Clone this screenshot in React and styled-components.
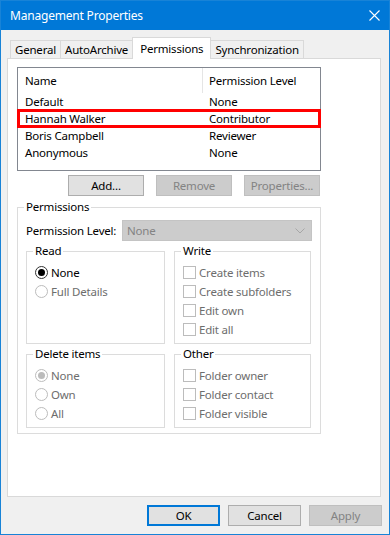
import React from "react"
import styled, { createGlobalStyle } from "styled-components"

const GlobalStyle = createGlobalStyle`
  html, body {
    margin: 0;
    padding: 0;
    background: #ffffff;
  }
  body {
    font-family: "Noto Sans", "Open Sans", sans-serif;
    font-size: 11.5px;
    letter-spacing: -0.2px;
    color: #000000;
  }
  * {
    box-sizing: border-box;
  }
`

const Window = styled.div`
  width: 390px;
  height: 535px;
  display: flex;
  flex-direction: column;
  border: 1px solid #1883d7;
  background: #f0f0f0;
  overflow: hidden;
`

const TitleBar = styled.div`
  height: 29px;
  flex: none;
  display: flex;
  align-items: center;
  justify-content: space-between;
  padding: 0 9px 0 9px;
  background: #0078d7;
  color: #ffffff;
  font-size: 12px;
`

const Body = styled.div`
  flex: 1;
  display: flex;
  flex-direction: column;
  padding: 7px 8px 8px 6px;
  min-height: 0;
`

const TabStrip = styled.div`
  display: flex;
  align-items: flex-end;
  height: 22px;
  padding-left: 3px;
  margin-bottom: -1px;
  position: relative;
  z-index: 1;
`

const Tab = styled.div`
  height: ${(p) => (p.$active ? "22px" : "19px")};
  padding: 0 ${(p) => (p.$active ? "7px" : "4px")};
  margin-left: -1px;
  display: flex;
  align-items: center;
  border: 1px solid #d9d9d9;
  border-bottom: ${(p) => (p.$active ? "none" : "1px solid #d9d9d9")};
  background: ${(p) => (p.$active ? "#ffffff" : "#f0f0f0")};
  position: relative;
  z-index: ${(p) => (p.$active ? 2 : 1)};
  white-space: nowrap;
  &:first-child {
    margin-left: 0;
  }
`

const Panel = styled.div`
  flex: 1;
  background: #ffffff;
  border: 1px solid #d9d9d9;
  padding: 8px 9px;
  display: flex;
  flex-direction: column;
  align-items: flex-start;
`

const ListBox = styled.div`
  width: 304px;
  height: 104px;
  flex: none;
  border: 1px solid #828790;
  background: #ffffff;
`

const ListRow = styled.div`
  display: grid;
  grid-template-columns: 185px 1fr;
  height: ${(p) => (p.$header ? "25px" : "17px")};
  align-items: center;
  outline: ${(p) => (p.$marked ? "3px solid #ff0000" : "none")};
  outline-offset: -2px;
  position: relative;
`

const Cell = styled.div`
  padding-left: ${(p) => (p.$second ? "6px" : "7px")};
  height: 100%;
  display: flex;
  align-items: center;
  white-space: nowrap;
  border-right: ${(p) => (p.$divider ? "1px solid #e5e5e5" : "none")};
`

const ButtonRow = styled.div`
  width: 304px;
  display: flex;
  justify-content: flex-end;
  gap: 12px;
  margin-top: 4px;
  padding-right: 1px;
`

const Button = styled.button`
  width: ${(p) => p.$w || 76}px;
  height: 21px;
  padding: 0;
  font: inherit;
  letter-spacing: inherit;
  color: ${(p) => (p.disabled ? "#838383" : "#000000")};
  background: ${(p) => (p.disabled ? "#cccccc" : "#e1e1e1")};
  border: ${(p) =>
    p.$primary ? "2px solid #0078d7" : p.disabled ? "1px solid #bfbfbf" : "1px solid #adadad"};
`

const Group = styled.fieldset`
  margin: 0;
  padding: ${(p) => (p.$outer ? "5px 8px 5px 8px" : "4px 8px 4px 8px")};
  border: 1px solid #dcdcdc;
  min-width: 0;
`

const Legend = styled.legend`
  padding: 0 2px;
  margin-left: -2px;
  line-height: 16px;
  color: #000000;
`

const OuterGroup = styled(Group)`
  width: 304px;
  margin-top: 3px;
`

const LevelRow = styled.div`
  display: flex;
  align-items: center;
  justify-content: space-between;
  white-space: nowrap;
`

const Select = styled.div`
  width: 190px;
  height: 21px;
  display: flex;
  align-items: center;
  justify-content: space-between;
  padding: 0 6px 0 4px;
  background: #cccccc;
  border: 1px solid #c4c4c4;
  color: #838383;
`

const GroupGrid = styled.div`
  display: grid;
  grid-template-columns: 139px 137px;
  column-gap: 9px;
  row-gap: 2px;
  margin-top: 2px;
`

const Option = styled.div`
  height: 19px;
  display: flex;
  align-items: center;
  gap: 3px;
  color: ${(p) => (p.$disabled ? "#6d6d6d" : "#000000")};
  white-space: nowrap;
`

const RadioMark = styled.span`
  width: 13px;
  height: 13px;
  flex: none;
  border-radius: 50%;
  border: 1px solid ${(p) => (p.$disabled ? "#bcbcbc" : "#333333")};
  background: #ffffff;
  display: flex;
  align-items: center;
  justify-content: center;
  &::after {
    content: "";
    width: 7px;
    height: 7px;
    border-radius: 50%;
    background: ${(p) => (p.$checked ? (p.$disabled ? "#bcbcbc" : "#000000") : "transparent")};
  }
`

const CheckMark = styled.span`
  width: 13px;
  height: 13px;
  flex: none;
  border: 1px solid #bcbcbc;
  background: #ffffff;
`

const Footer = styled.div`
  display: flex;
  justify-content: flex-end;
  gap: 8px;
  margin-top: 8px;
  margin-right: -1px;
`

const CloseIcon = () => (
  <svg width="11" height="11" viewBox="0 0 11 11">
    <path d="M0.5 0.5 L10.5 10.5 M10.5 0.5 L0.5 10.5" stroke="#ffffff" strokeWidth="1.1" />
  </svg>
)

const Chevron = () => (
  <svg width="10" height="6" viewBox="0 0 10 6">
    <path d="M0.5 0.5 L5 5 L9.5 0.5" fill="none" stroke="#a6a6a6" strokeWidth="1" />
  </svg>
)

const Radio = ({ label, checked, disabled }) => (
  <Option $disabled={disabled}>
    <RadioMark $checked={checked} $disabled={disabled} />
    {label}
  </Option>
)

const Check = ({ label }) => (
  <Option $disabled>
    <CheckMark />
    {label}
  </Option>
)

const people = [
  ["Default", "None"],
  ["Hannah Walker", "Contributor", true],
  ["Boris Campbell", "Reviewer"],
  ["Anonymous", "None"],
]

export default function App() {
  return (
    <>
      <GlobalStyle />
      <Window>
        <TitleBar>
          <span>Management Properties</span>
          <CloseIcon />
        </TitleBar>
        <Body>
          <TabStrip>
            <Tab>General</Tab>
            <Tab>AutoArchive</Tab>
            <Tab $active>Permissions</Tab>
            <Tab>Synchronization</Tab>
          </TabStrip>
          <Panel>
            <ListBox>
              <ListRow $header>
                <Cell $divider>Name</Cell>
                <Cell $second>Permission Level</Cell>
              </ListRow>
              {people.map(([name, level, marked]) => (
                <ListRow key={name} $marked={marked}>
                  <Cell>{name}</Cell>
                  <Cell $second>{level}</Cell>
                </ListRow>
              ))}
            </ListBox>
            <ButtonRow>
              <Button>Add...</Button>
              <Button disabled>Remove</Button>
              <Button disabled>Properties...</Button>
            </ButtonRow>
            <OuterGroup $outer>
              <Legend>Permissions</Legend>
              <LevelRow>
                <span>Permission Level:</span>
                <Select>
                  <span>None</span>
                  <Chevron />
                </Select>
              </LevelRow>
              <GroupGrid>
                <Group>
                  <Legend>Read</Legend>
                  <Radio label="None" checked />
                  <Radio label="Full Details" disabled />
                </Group>
                <Group>
                  <Legend>Write</Legend>
                  <Check label="Create items" />
                  <Check label="Create subfolders" />
                  <Check label="Edit own" />
                  <Check label="Edit all" />
                </Group>
                <Group>
                  <Legend>Delete items</Legend>
                  <Radio label="None" checked disabled />
                  <Radio label="Own" disabled />
                  <Radio label="All" disabled />
                </Group>
                <Group>
                  <Legend>Other</Legend>
                  <Check label="Folder owner" />
                  <Check label="Folder contact" />
                  <Check label="Folder visible" />
                </Group>
              </GroupGrid>
            </OuterGroup>
          </Panel>
          <Footer>
            <Button $primary $w={73}>OK</Button>
            <Button $w={73}>Cancel</Button>
            <Button disabled $w={73}>Apply</Button>
          </Footer>
        </Body>
      </Window>
    </>
  )
}
